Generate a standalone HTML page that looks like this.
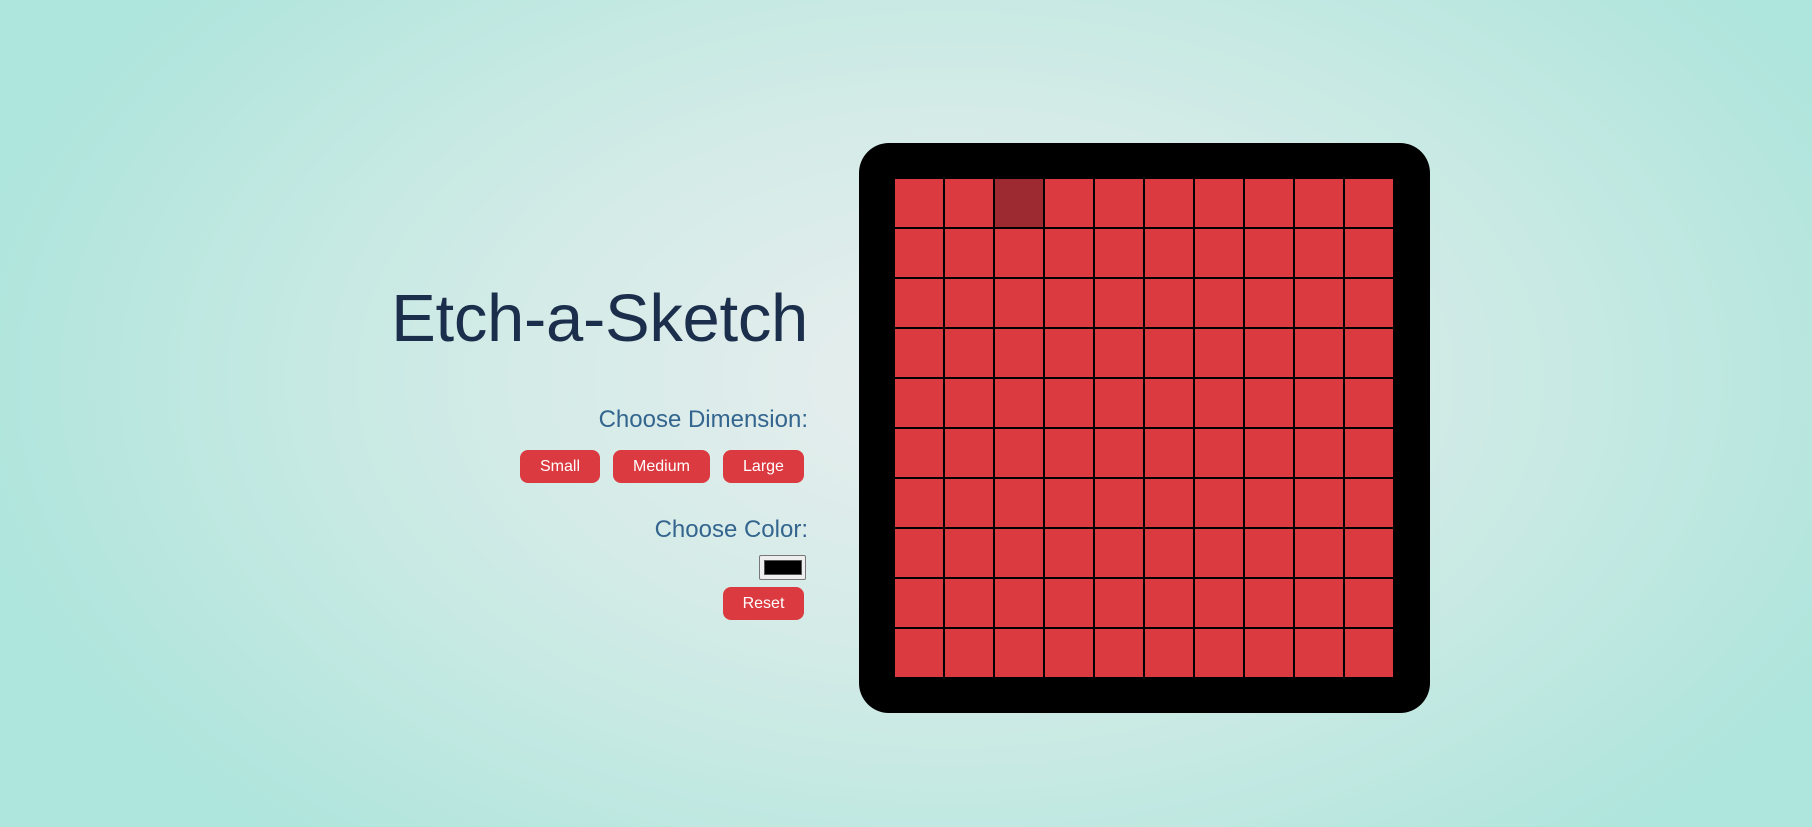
<!DOCTYPE html>
<html><head><style>
html,body{margin:0;padding:0;}
body{width:1812px;height:827px;overflow:hidden;position:relative;font-family:"Liberation Sans",Arial,sans-serif;
background:radial-gradient(ellipse 1000px 620px at 950px 380px,#e8eeee 0%,#d3ebe7 45%,#aee5dc 100%);}
.t{position:absolute;right:1004px;white-space:nowrap;}
h1{margin:0;position:absolute;right:1004px;top:279px;font-size:67px;font-weight:normal;color:#1b2f4d;line-height:80px;letter-spacing:-0.3px;}
.lbl{font-size:24px;color:#33658f;}
.btn{position:absolute;background:#db3a40;color:#fff;border-radius:8px;height:33px;line-height:33px;text-align:center;font-size:16px;}
.board{position:absolute;left:859px;top:143px;width:499px;height:498px;padding:36px;background:#000;border-radius:30px;}
.grid{display:grid;grid-template-columns:repeat(10,48px);grid-template-rows:repeat(10,48px);gap:2px;}
.grid div{background:#db3a40;}
</style></head><body>
<h1>Etch-a-Sketch</h1>
<div class="t lbl" style="top:406px">Choose Dimension:</div>
<div class="btn" style="left:520px;top:450px;width:80px">Small</div>
<div class="btn" style="left:613px;top:450px;width:97px">Medium</div>
<div class="btn" style="left:723px;top:450px;width:81px">Large</div>
<div class="t lbl" style="top:516px">Choose Color:</div>
<div style="position:absolute;left:759px;top:555px;width:45px;height:23px;border:1px solid #777;border-radius:2px;background:#eee;box-sizing:content-box;">
<div style="position:absolute;left:4px;top:4px;width:38px;height:15px;background:#000;border:1px solid #555;box-sizing:border-box;"></div></div>
<div class="btn" style="left:723px;top:587px;width:81px">Reset</div>
<div class="board"><div class="grid">
<div></div><div></div><div style="background:#9e2a31"></div><div></div><div></div><div></div><div></div><div></div><div></div><div></div>
<div></div><div></div><div></div><div></div><div></div><div></div><div></div><div></div><div></div><div></div>
<div></div><div></div><div></div><div></div><div></div><div></div><div></div><div></div><div></div><div></div>
<div></div><div></div><div></div><div></div><div></div><div></div><div></div><div></div><div></div><div></div>
<div></div><div></div><div></div><div></div><div></div><div></div><div></div><div></div><div></div><div></div>
<div></div><div></div><div></div><div></div><div></div><div></div><div></div><div></div><div></div><div></div>
<div></div><div></div><div></div><div></div><div></div><div></div><div></div><div></div><div></div><div></div>
<div></div><div></div><div></div><div></div><div></div><div></div><div></div><div></div><div></div><div></div>
<div></div><div></div><div></div><div></div><div></div><div></div><div></div><div></div><div></div><div></div>
<div></div><div></div><div></div><div></div><div></div><div></div><div></div><div></div><div></div><div></div>
</div></div>
</body></html>
